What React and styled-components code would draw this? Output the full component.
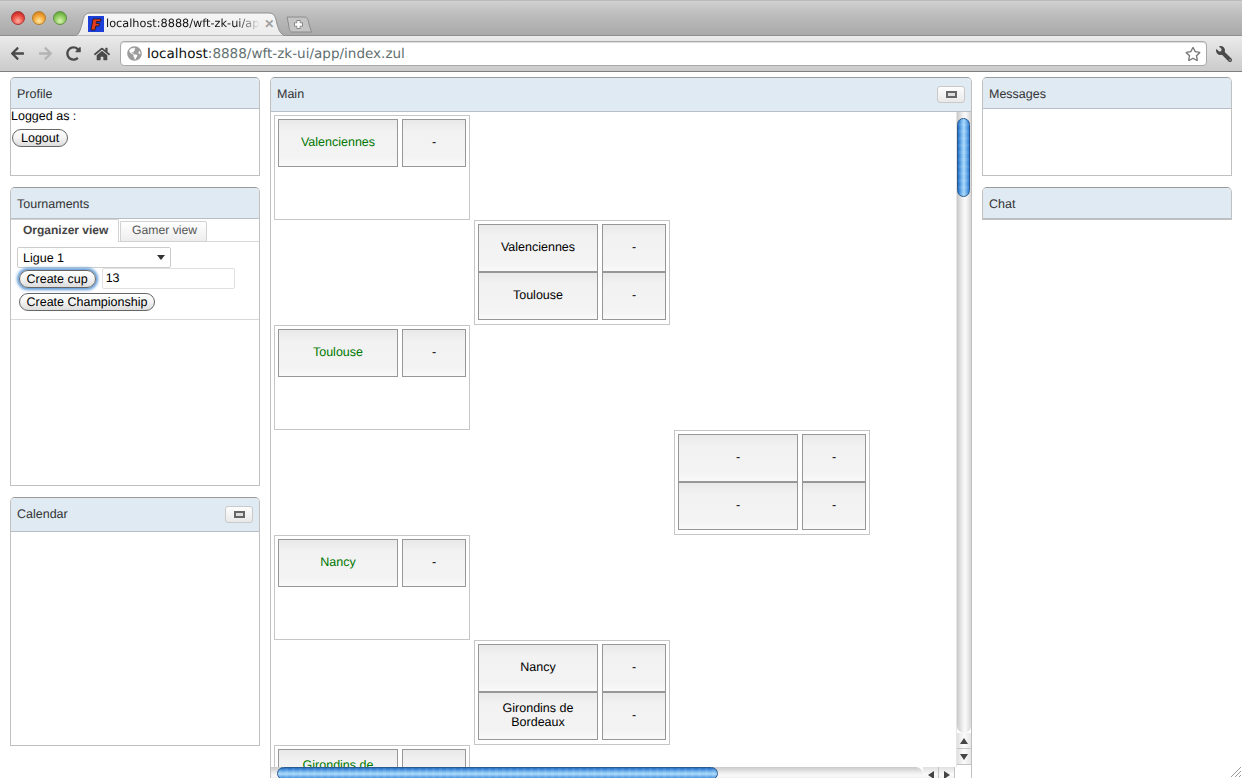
import React from 'react';
import styled, { createGlobalStyle } from 'styled-components';
import { FaArrowLeft, FaArrowRight, FaRedoAlt, FaHome, FaWrench, FaRegStar, FaGlobeAmericas } from 'react-icons/fa';

const Global = createGlobalStyle`
  html, body { margin: 0; padding: 0; height: 778px; overflow: hidden; background: #fff; }
  * { box-sizing: border-box; }
`;
const Window = styled.div`
  width: 1242px; height: 778px; overflow: hidden; position: relative;
  display: flex; flex-direction: column;
  font-family: "Liberation Sans", Arial, sans-serif; font-size: 12.5px; color: #000;
  text-rendering: geometricPrecision;
`;
const TabBar = styled.div`
  height: 36px; flex: none; position: relative; display: flex; align-items: flex-end;
  background: linear-gradient(#d0d0d0, #bdbdbd 40%, #a9a9a9);
  border-top: 1px solid #bbb; border-bottom: 1px solid #8e8e8e;
  padding-left: 11px;
`;
const Lights = styled.div`display: flex; gap: 7px; align-self: flex-start; margin-top: 10px;`;
const Light = styled.span`
  width: 14px; height: 14px; border-radius: 50%; border: 1px solid ${p => p.$edge};
  background: radial-gradient(circle at 50% 75%, ${p => p.$light} 0, ${p => p.$mid} 55%, ${p => p.$dark} 100%);
`;
const Tab = styled.div`
  position: relative; width: 215px; height: 24px; margin-left: 6px; margin-bottom: -1px;
  display: flex; align-items: center; padding: 0 14px 1px 15px; gap: 2px; color: #111;
`;
const TabShape = styled.svg`position: absolute; left: 0; top: 0; width: 215px; height: 24px;`;
const Favicon = styled.svg`position: relative; width: 16px; height: 16px; flex: none;`;
const TabTitle = styled.span`
  position: relative; width: 154px; white-space: nowrap; font-family: "DejaVu Sans", sans-serif; font-size: 11.3px;
  -webkit-mask-image: linear-gradient(90deg, #000 130px, transparent 154px);
  mask-image: linear-gradient(90deg, #000 130px, transparent 154px);
`;
const TabClose = styled.span`position: relative; margin-left: 3px; color: #a0a0a0; font-size: 12px; font-weight: bold; line-height: 1;`;
const NewTab = styled.svg`width: 27px; height: 17px; margin: 0 0 2px -2px; flex: none;`;
const Toolbar = styled.div`
  height: 36px; flex: none; display: flex; align-items: center; padding: 0 9px 0 10px;
  background: linear-gradient(#ebebeb, #d4d4d4 70%, #cbcbcb);
  border-bottom: 1px solid #7f7f7f;
`;
const NavIcon = styled.span`
  width: ${p => p.$w}px; flex: none; display: flex; align-items: center; color: ${p => p.$c || '#4a4a4a'};
  transform: ${p => p.$flip ? 'scaleX(-1)' : 'none'};
`;
const Omnibox = styled.div`
  width: 1087px; height: 25px; flex: none; margin-left: 3px; margin-right: 7px; background: #fff;
  border: 1px solid #a9a9a9; border-radius: 4px; display: flex; align-items: center; padding: 0 5px 0 6px;
  box-shadow: inset 0 1px 1px #ddd;
`;
const Globe = styled.span`color: #9c9c9c; display: flex; margin-right: 5px;`;
const Url = styled.div`flex: 1; font-family: "DejaVu Sans", sans-serif; font-size: 13.55px; color: #5f6f6f; white-space: nowrap;`;
const Host = styled.span`color: #111;`;
const Content = styled.div`
  flex: 1; min-height: 0; display: flex; gap: 10px; padding: 5px 10px 0; align-items: flex-start;
`;
const Column = styled.div`width: ${p => p.$w}px; flex: none; display: flex; flex-direction: column; gap: 11px;`;
const Panel = styled.section`
  height: ${p => p.$h}px; flex: none; display: flex; flex-direction: column;
  border: 1px solid #c0c0c0; border-top-color: #9b9b9b; border-radius: 5px 5px 0 0; background: #fff;
  overflow: hidden;
`;
const PanelHead = styled.header`
  height: ${p => p.$tool ? 34 : 31}px; flex: none; background: #dfeaf3; border-bottom: 1px solid #b8bec4;
  display: flex; align-items: center; justify-content: space-between; padding: ${p => p.$tool ? '0 6px 2px' : '1px 6px 0'}; color: #333;
`;
const ToolBtn = styled.button`
  width: 28px; height: 17px; padding: 0; border: 1px solid #c9c9c9; border-radius: 3px;
  background: linear-gradient(#fdfdfd, #e9e9e9); display: flex; align-items: center; justify-content: center;
  margin-top: 2px;
  &::before { content: ""; box-sizing: border-box; width: 11px; height: 7px; border: 2px solid #666; background: #ddd; }
`;
const PanelBody = styled.div`flex: 1; min-height: 0; line-height: 14px;`;
const Pill = styled.button`
  font: 12.5px "Liberation Sans", Arial, sans-serif; text-rendering: geometricPrecision; color: #000; height: 18px; padding: 0 7px 0 6.5px; border: 1px solid #666;
  border-radius: 9px; background: linear-gradient(#fff, #f3f3f3 50%, #dcdcdc);
  box-shadow: ${p => p.$focus ? '0 0 3px 2px #5f9ad6' : 'none'}; flex: none;
`;
const ProfilePill = styled(Pill)`margin: 6px 0 0 1px; display: block; padding: 0 8px;`;
const Tabs = styled.div`display: flex; align-items: flex-end; height: 23px; margin-bottom: -1px;`;
const TabItem = styled.div`
  height: ${p => p.$on ? 23 : 21}px; width: ${p => p.$w}px; margin-right: 1px; display: flex; align-items: center;
  padding: 0 0 ${p => p.$on ? 2 : 3}px ${p => p.$on ? 12 : 11}px;
  border: 1px solid #d2d2d2; border-left-width: ${p => p.$on ? 0 : 1}px; border-bottom: ${p => p.$on ? 'none' : '1px solid #d2d2d2'};
  background: ${p => p.$on ? '#fff' : 'linear-gradient(#fff, #ededed)'}; border-radius: 0 2px 0 0;
  color: ${p => p.$on ? '#444' : '#555'}; font-weight: ${p => p.$on ? 'bold' : 'normal'}; font-size: ${p => p.$on ? 12 : 12.2}px; position: relative; z-index: ${p => p.$on ? 1 : 0};
`;
const TabPane = styled.div`
  height: 79px; border-top: 1px solid #d8d8d8; border-bottom: 1px solid #d8d8d8; padding: 5px 0 0 6px; display: flex; flex-direction: column;
`;
const SelectBox = styled.div`
  width: 154px; height: 21px; border: 1px solid #ccc; border-radius: 2px; display: flex; align-items: center; justify-content: space-between;
  padding: 0 5px; background: #fff; flex: none;
  &::after { content: ""; border: 4px solid transparent; border-top: 5px solid #333; border-bottom: none; }
`;
const FormRow = styled.div`display: flex; align-items: center; gap: 6px; padding-left: 2px; height: 21px; margin-top: ${p => p.$mt || 0}px;`;
const TextBox = styled.div`
  width: 133px; height: 21px; border: 1px solid #e0e0e0; border-radius: 2px; padding: 2px 3px; line-height: 14px;
`;
const Row = styled.div`flex: 1; min-height: 0; display: flex;`;
const Viewport = styled.div`flex: 1; min-width: 0; overflow: hidden; padding: 3px;`;
const Bracket = styled.div`display: grid; grid-template-columns: repeat(3, 200px); grid-auto-rows: 105px;`;
const Match = styled.div`
  grid-column: ${p => p.$col}; grid-row: ${p => p.$row}; width: 196px; height: 105px; border: 1px solid #c6c6c6;
  padding: 3px; display: grid; grid-template-columns: 120px 64px; grid-auto-rows: 48px; column-gap: 4px;
`;
const Cell = styled.div`
  border: 1px solid #979797; display: flex; align-items: center; justify-content: center; text-align: center;
  background: linear-gradient(#e9e9e9, #f2f2f2 25%, #f3f3f3 80%, #f9f9f9); padding: 0 6px 3px;
  color: ${p => p.$win ? '#007800' : '#000'}; line-height: 14px;
`;
const VBar = styled.div`width: 15px; flex: none; display: flex; flex-direction: column; border-left: 1px solid #e5e5e5;`;
const VTrack = styled.div`
  height: 621px; flex: none; padding-top: 6px; border-radius: 0 0 8px 8px;
  background: linear-gradient(90deg, #c9c9c9, #efefef 40%, #fafafa 60%, #d6d6d6);
`;
const VThumb = styled.div`
  width: 13px; height: 79px; border: 1px solid #2a5a92; border-radius: 7px;
  background:
    repeating-linear-gradient(0deg, rgba(255,255,255,.07) 0 3px, rgba(255,255,255,0) 3px 7px),
    linear-gradient(90deg, #1f6cc4, #7dbcf0 35%, #a9d9fb 55%, #2f80d8);
`;
const ArrowBtn = styled.div`
  width: ${p => p.$w || 14}px; height: ${p => p.$h || 16}px; flex: none; display: flex; align-items: center; justify-content: center;
  background: linear-gradient(${p => p.$dir || '90deg'}, #e0e0e0, #fbfbfb 50%, #e6e6e6);
  border-${p => p.$side || 'bottom'}: 1px solid #c4c4c4;
`;
const Tri = styled.svg`width: 8px; height: 8px; display: block;`;
const HBar = styled.div`height: 15px; flex: none; display: flex;`;
const HTrack = styled.div`
  width: 652px; flex: none; padding-left: 6px; border-radius: 0 8px 8px 0;
  background: linear-gradient(#c9c9c9, #efefef 40%, #fafafa 60%, #d6d6d6);
`;
const HThumb = styled.div`
  width: 441px; height: 13px; border: 1px solid #2a5a92; border-radius: 7px;
  background:
    repeating-linear-gradient(90deg, rgba(255,255,255,.07) 0 3px, rgba(255,255,255,0) 3px 7px),
    linear-gradient(#1f6cc4, #7dbcf0 35%, #a9d9fb 55%, #2f80d8);
`;
const Grip = styled.svg`position: absolute; right: 0; bottom: 0; width: 13px; height: 13px;`;

const matches = [
  { col: 1, row: 1, rows: [['Valenciennes', true]] },
  { col: 2, row: 2, rows: [['Valenciennes'], ['Toulouse']] },
  { col: 1, row: 3, rows: [['Toulouse', true]] },
  { col: 3, row: 4, rows: [['-'], ['-']] },
  { col: 1, row: 5, rows: [['Nancy', true]] },
  { col: 2, row: 6, rows: [['Nancy'], ['Girondins de Bordeaux']] },
  { col: 1, row: 7, rows: [['Girondins de Bordeaux', true]] },
];

const triangles = { up: '4,1 8,7 0,7', down: '0,1 8,1 4,7', left: '7,0 7,8 1,4', right: '1,0 1,8 7,4' };
const Arrow = ({ to }) => (
  <Tri viewBox="0 0 8 8"><polygon points={triangles[to]} fill="#444" /></Tri>
);

export default function App() {
  return (
    <Window>
      <Global />
      <TabBar>
        <Lights>
          <Light $edge="#a33" $light="#ffb0a0" $mid="#e8453c" $dark="#a01c1c" />
          <Light $edge="#b5802a" $light="#ffe9a0" $mid="#f0a030" $dark="#b8701a" />
          <Light $edge="#5f9440" $light="#d8f5b0" $mid="#86c556" $dark="#4f8f2f" />
        </Lights>
        <Tab>
          <TabShape viewBox="0 0 215 24">
            <defs>
              <linearGradient id="tabFill" x1="0" y1="0" x2="0" y2="1">
                <stop offset="0" stopColor="#f6f6f6" />
                <stop offset="1" stopColor="#ebebeb" />
              </linearGradient>
            </defs>
            <path d="M0 24 C6 24 7 19 9 12 C11 3 12 1 18 1 L195 1 C201 1 202 3 204 12 C206 19 208 24 215 24 Z" fill="url(#tabFill)" stroke="#8f8f8f" />
          </TabShape>
          <Favicon viewBox="0 0 16 16">
            <rect width="16" height="16" fill="#1d3fd8" />
            <path d="M3 14 L5 3 L13 3 L12.5 5.5 L8.5 5.5 L8.2 7.5 L11.5 7.5 L11 10 L7.8 10 L7 14 Z" fill="#e23a1c" stroke="#111" strokeWidth="0.7" />
          </Favicon>
          <TabTitle>localhost:8888/wft-zk-ui/ap</TabTitle>
          <TabClose>✕</TabClose>
        </Tab>
        <NewTab viewBox="0 0 27 17">
          <path d="M1 1 L19 1 C21 1 22 3 23 8 C24 12 25 15 26 16 L6 16 C4 16 3 13 2.5 8 Z" fill="#c4c4c4" stroke="#8c8c8c" />
          <path d="M12.5 4 V13 M8 8.5 H17" stroke="#858585" strokeWidth="4" />
          <path d="M12.5 5 V12 M9 8.5 H16" stroke="#fff" strokeWidth="2.4" />
        </NewTab>
      </TabBar>
      <Toolbar>
        <NavIcon $w={28}><FaArrowLeft size={15} /></NavIcon>
        <NavIcon $w={28} $c="#b4b4b4"><FaArrowRight size={15} /></NavIcon>
        <NavIcon $w={28}><FaRedoAlt size={15} /></NavIcon>
        <NavIcon $w={23}><FaHome size={16} /></NavIcon>
        <Omnibox>
          <Globe><FaGlobeAmericas size={15} /></Globe>
          <Url><Host>localhost</Host>:8888/wft-zk-ui/app/index.zul</Url>
          <NavIcon $w={16} $c="#777"><FaRegStar size={16} /></NavIcon>
        </Omnibox>
        <NavIcon $w={18} $flip><FaWrench size={16} /></NavIcon>
      </Toolbar>
      <Content>
        <Column $w={250}>
          <Panel $h={99}>
            <PanelHead>Profile</PanelHead>
            <PanelBody>
              Logged as :
              <ProfilePill>Logout</ProfilePill>
            </PanelBody>
          </Panel>
          <Panel $h={299}>
            <PanelHead>Tournaments</PanelHead>
            <PanelBody>
              <Tabs>
                <TabItem $on $w={108}>Organizer view</TabItem>
                <TabItem $w={87}>Gamer view</TabItem>
              </Tabs>
              <TabPane>
                <SelectBox>Ligue 1</SelectBox>
                <FormRow>
                  <Pill $focus>Create cup</Pill>
                  <TextBox>13</TextBox>
                </FormRow>
                <FormRow $mt={2}>
                  <Pill>Create Championship</Pill>
                </FormRow>
              </TabPane>
            </PanelBody>
          </Panel>
          <Panel $h={249}>
            <PanelHead $tool>Calendar<ToolBtn aria-label="Minimize" /></PanelHead>
          </Panel>
        </Column>
        <Column $w={702}>
          <Panel $h={706}>
            <PanelHead $tool>Main<ToolBtn aria-label="Minimize" /></PanelHead>
            <Row>
              <Viewport>
                <Bracket>
                  {matches.map(m => (
                    <Match key={`${m.col}-${m.row}`} $col={m.col} $row={m.row}>
                      {m.rows.map(([name, win], i) => (
                        <React.Fragment key={i}>
                          <Cell $win={win}>{name}</Cell>
                          <Cell>-</Cell>
                        </React.Fragment>
                      ))}
                    </Match>
                  ))}
                </Bracket>
              </Viewport>
              <VBar>
                <VTrack><VThumb /></VTrack>
                <ArrowBtn><Arrow to="up" /></ArrowBtn>
                <ArrowBtn><Arrow to="down" /></ArrowBtn>
              </VBar>
            </Row>
            <HBar>
              <HTrack><HThumb /></HTrack>
              <ArrowBtn $w={16} $h={15} $dir="180deg" $side="right"><Arrow to="left" /></ArrowBtn>
              <ArrowBtn $w={16} $h={15} $dir="180deg" $side="right"><Arrow to="right" /></ArrowBtn>
            </HBar>
          </Panel>
        </Column>
        <Column $w={250}>
          <Panel $h={99}>
            <PanelHead>Messages</PanelHead>
          </Panel>
          <Panel $h={33}>
            <PanelHead>Chat</PanelHead>
          </Panel>
        </Column>
      </Content>
      <Grip viewBox="0 0 13 13">
        <path d="M12 2 L2 12 M12 6 L6 12 M12 10 L10 12" stroke="#999" strokeWidth="1" />
      </Grip>
    </Window>
  );
}
